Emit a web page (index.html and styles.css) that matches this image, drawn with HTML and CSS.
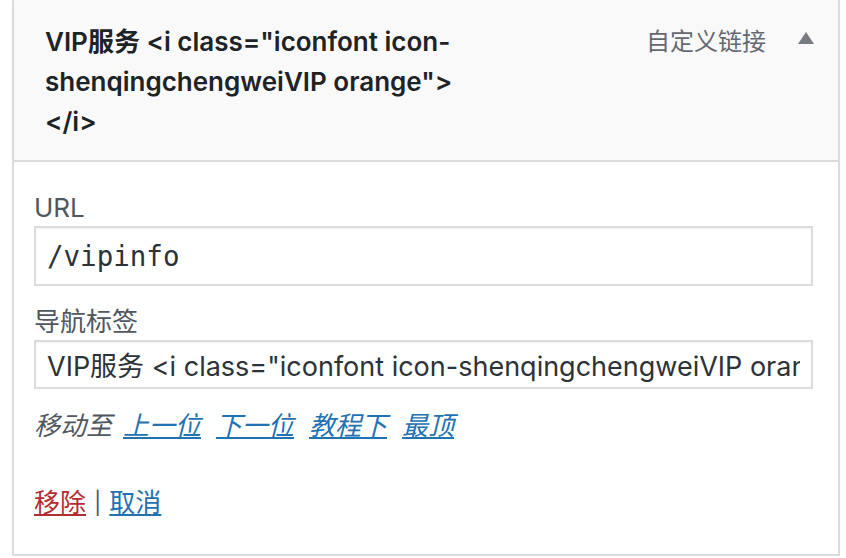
FILE: index.html
```html
<!DOCTYPE html>
<html lang="zh-CN">
<head>
    <meta charset="UTF-8">
    <title>菜单项</title>
    <link rel="stylesheet" href="styles.css">
</head>
<body>
    <div class="menu-item">
        <div class="item-bar">
            <span class="item-title">VIP服务 &lt;i class="iconfont icon-shenqingchengweiVIP orange"&gt;<wbr>&lt;/i&gt;</span>
            <span class="item-controls">
                <span class="item-type">自定义链接</span>
                <span class="item-toggle"></span>
            </span>
        </div>
        <div class="item-settings">
            <label class="field">
                <span class="field-label">URL</span>
                <input type="text" class="input code" value="/vipinfo">
            </label>
            <label class="field">
                <span class="field-label">导航标签</span>
                <input type="text" class="input" value='VIP服务 <i class="iconfont icon-shenqingchengweiVIP orange"></i>'>
            </label>
            <div class="move-row">
                <span class="move-label">移动至</span>
                <a href="#">上一位</a>
                <a href="#">下一位</a>
                <a href="#">教程下</a>
                <a href="#">最顶</a>
            </div>
            <div class="actions">
                <a href="#" class="delete">移除</a>
                <span class="sep">|</span>
                <a href="#">取消</a>
            </div>
        </div>
    </div>
</body>
</html>
```

FILE: styles.css
```css
* {
    margin: 0;
    padding: 0;
    box-sizing: border-box;
}

body {
    background: #fff;
    font-family: Inter, "Noto Sans CJK SC", sans-serif;
    color: #1d2327;
}

/* Menu item box */
.menu-item {
    margin-left: 12px;
    width: 828px;
    border: 2px solid #dcdcde;
    border-top: none;
    box-shadow: 0 2px 2px rgba(0, 0, 0, 0.04);
}

.item-bar {
    display: flex;
    justify-content: space-between;
    align-items: flex-start;
    background: #f9f9f9;
    border-bottom: 2px solid #dcdcde;
    padding: 22px 24px 18px 31px;
    height: 162px;
}

.item-title {
    width: 430px;
    font-size: 26px;
    font-weight: 600;
    line-height: 40px;
    color: #1d2327;
}

.item-controls {
    display: flex;
    align-items: center;
    gap: 32px;
    height: 40px;
    margin-top: -3px;
}

.item-type {
    font-size: 24px;
    color: #646970;
}

.item-toggle {
    width: 0;
    height: 0;
    border-left: 8px solid transparent;
    border-right: 8px solid transparent;
    border-bottom: 12px solid #787c82;
    margin-top: -2px;
}

/* Settings */
.item-settings {
    padding: 33px 25px 0 20px;
    height: 392px;
}

.field {
    display: block;
    margin-bottom: 23px;
}

.field-label {
    display: block;
    font-size: 26px;
    line-height: 26px;
    color: #50575e;
    margin-bottom: 5px;
}

.input {
    display: block;
    width: 100%;
    height: 49px;
    border: 2px solid #dcdcde;
    background: #fff;
    padding: 0 11px;
    font-family: Inter, "Noto Sans CJK SC", sans-serif;
    font-size: 27px;
    color: #2c3338;
    box-shadow: inset 0 1px 2px rgba(0, 0, 0, 0.05);
    outline: none;
}

.input.code {
    height: 60px;
    font-family: "DejaVu Sans Mono", monospace;
    font-size: 27.5px;
}

.move-row {
    display: flex;
    gap: 15px;
    font-size: 26px;
    line-height: 28px;
    font-style: italic;
}

.move-label {
    color: #50575e;
    margin-right: -4px;
}

a {
    color: #2271b1;
    text-decoration: underline;
}

.actions {
    display: flex;
    align-items: center;
    gap: 8px;
    font-size: 26px;
    line-height: 28px;
    margin-top: 49px;
}

.actions .delete {
    color: #b32d2e;
}

.sep {
    font-size: 22px;
    color: #50575e;
}
```
